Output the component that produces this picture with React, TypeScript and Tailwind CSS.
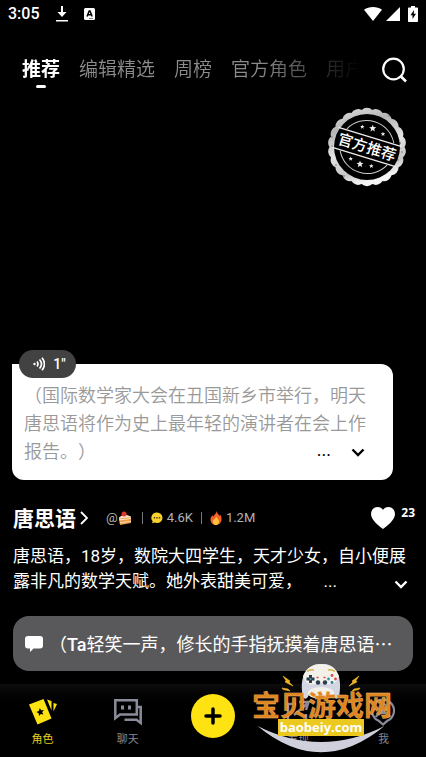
import * as React from "react";
import { useState } from "react";

const TABS = ["推荐", "编辑精选", "周榜", "官方角色", "用户"];

function StatusBar() {
  return (
    <div className="flex h-7 items-center px-2">
      <span className="font-['Roboto',sans-serif] text-base font-medium leading-7">3:05</span>
      <svg className="ml-4 h-4 w-3" viewBox="0 0 12 16" fill="#fff">
        <path d="M5 0h2v6h3.500L6 11 1.500 6H5zM0 14h12v1.500H0z" />
      </svg>
      <svg className="ml-4 h-3 w-3" viewBox="0 0 12 12">
        <rect width="11" height="12" rx="1.500" fill="#fff" />
        <path d="M3 8.500 5.200 3h.8l2.200 5.500M4 6.700h3.200" stroke="#000" strokeWidth="1.500" fill="none" />
        <path d="M5.500 10.500h1M7.500 10.500h1" stroke="#000" />
      </svg>
      <div className="ml-auto flex items-center">
        <svg className="h-3.5 w-4.5" viewBox="0 0 18 14" fill="#fff">
          <path d="M9 14 0 2.800C5-.9 13-.9 18 2.800z" />
        </svg>
        <svg className="ml-1 h-3.5 w-3.5" viewBox="0 0 14 14" fill="#fff">
          <path d="M14 0v14H0z" />
        </svg>
        <svg className="ml-2 h-4 w-2.5" viewBox="0 0 10 16">
          <path d="M3 0h4v1.500h2c.6 0 1 .4 1 1V15c0 .6-.4 1-1 1H1c-.6 0-1-.4-1-1V2.500c0-.6.400-1 1-1h2z" fill="#fff" />
          <path d="M6 4 2.500 9.300h2V13L8 7.700H5.800z" fill="#000" />
        </svg>
      </div>
    </div>
  );
}

function scallop() {
  const points = 22;
  let d = "";
  for (let i = 0; i <= points; i++) {
    const a = (i / points) * Math.PI * 2;
    const x = (40 + 37.5 * Math.cos(a)).toFixed(2);
    const y = (40 + 37.5 * Math.sin(a)).toFixed(2);
    d += i === 0 ? `M${x} ${y}` : `A8 8 0 0 1 ${x} ${y}`;
  }
  return d + "Z";
}

const STAR = "M0-3.500.9-1.200 3.500-1 1.500.600 2.200 3.200 0 1.700-2.200 3.200-1.500.600-3.500-1-.9-1.200z";

function OfficialBadge() {
  return (
    <svg className="h-20 w-20" viewBox="0 0 80 80" role="img" aria-label="官方推荐">
      <defs>
        <linearGradient id="ring" x1="0" y1="0" x2="0.300" y2="1">
          <stop offset="0" stopColor="#e6e6e6" />
          <stop offset="0.300" stopColor="#b5b5b5" />
          <stop offset="0.600" stopColor="#e4e4e4" />
          <stop offset="0.850" stopColor="#c6c6c6" />
          <stop offset="1" stopColor="#f5f5f5" />
        </linearGradient>
      </defs>
      <path d={scallop()} fill="url(#ring)" />
      <circle cx="40" cy="40" r="33" fill="#000" />
      <g transform="rotate(17 40 40)">
        <path d="M15.500 28.500A27.500 27.500 0 0 1 64.500 28.500M15.500 51.500A27.500 27.500 0 0 0 64.500 51.500" fill="none" stroke="#ccc" />
        <path d="M7 29.500h66M7 50.500h66" stroke="#eee" strokeWidth="1.200" />
        <text x="40" y="45.500" textAnchor="middle" fill="#fff" fontSize="15" fontWeight="500">官方推荐</text>
      </g>
      <g fill="#eee">
        <path d={STAR} transform="translate(45.700 21.300)" />
        <path d={STAR} transform="translate(35.300 19.700) scale(.65)" />
        <path d={STAR} transform="translate(56 27) scale(.65)" />
        <path d={STAR} transform="translate(33 57)" />
        <path d={STAR} transform="translate(23.700 51.700) scale(.65)" />
        <path d={STAR} transform="translate(44.300 59) scale(.65)" />
      </g>
      <g fill="#000" opacity="0.450">
        <circle cx="73" cy="36" r=".9" />
        <circle cx="75" cy="45" r=".8" />
        <circle cx="74" cy="41" r=".5" />
        <circle cx="71" cy="53" r=".7" />
        <circle cx="9" cy="58" r=".8" />
        <circle cx="5" cy="30" r=".7" />
        <circle cx="5" cy="39" r=".7" />
        <circle cx="17" cy="69" r=".8" />
        <circle cx="62" cy="9" r=".7" />
      </g>
    </svg>
  );
}

function Chevron({ className }: { className: string }) {
  return (
    <svg className={className} viewBox="0 0 14 9" fill="none" stroke="currentColor" strokeWidth="2.400">
      <path d="M1.500 1.500 7 7l5.500-5.500" />
    </svg>
  );
}

function CakeIcon() {
  return (
    <svg className="h-3.5 w-3.5" viewBox="0 0 14 14">
      <path d="M1 6.500 6 3l7 2.500v2L1 9z" fill="#fbe3d3" />
      <path d="M1 7.500 13 6v6L2 14z" fill="#f0a04b" />
      <path d="M1 8.500 13 7v.8L1 9.500zM1.500 11.500 13 10v.6L1.800 12.200z" fill="#fff0e0" />
      <circle cx="6" cy="3" r="2.500" fill="#e2372b" />
    </svg>
  );
}

function BubbleIcon() {
  return (
    <svg className="h-3 w-3" viewBox="0 0 12 12">
      <path d="M6 .5a5.500 5.300 0 1 1 0 10.600c-.9 0-1.700-.2-2.400-.5L1 11.300l.7-2A5.300 5.300 0 0 1 6 .5z" fill="#fbd32f" />
      <path d="M2.800 5.800h1.400M5.300 5.800h1.400M7.800 5.800h1.400" stroke="#5b3a10" strokeWidth="1.400" />
    </svg>
  );
}

function FireIcon() {
  return (
    <svg className="h-3.5 w-3" viewBox="0 0 12 14">
      <path d="M6.500 0c.3 2.500 2.300 3.200 3 5l.7-1.400c1 1.500 1.300 3 1.300 4.600C11.500 11.500 9 14 6 14S.5 11.700.5 8.700c0-2 .8-3.200 1.800-4.500l.8 1.600C4 4 6.300 3 6.500 0z" fill="#f4622a" />
      <path d="M6.200 5.500c.3 1.800 2.800 2.600 2.800 5C9 12.500 7.700 14 6 14s-3.200-1.400-3.200-3.300c0-2 2.900-2.800 3.400-5.200z" fill="#fdc23b" />
    </svg>
  );
}

function CardsIcon() {
  return (
    <svg className="h-7 w-7" viewBox="0 0 28 28">
      <path d="M0 6.500 14.500 1 22.500 20.500 8.500 26.500z" fill="#ffe211" />
      <path d="m10.800 10 1.300 2.300 2.700-.4-1.600 2.300 1.300 2.300-2.700-.5-1.800 2-.3-2.700-2.400-1.200 2.500-1.200z" fill="#000" />
      <path d="M18 1.500 22.500 3v9.500zM24.500 5l3.500 1-3.500 7.500z" fill="#ffe211" />
    </svg>
  );
}

function ChatIcon() {
  return (
    <svg className="h-7 w-7" viewBox="0 0 28 28" fill="none" stroke="#8a8b99" strokeWidth="2.500">
      <path d="M1.300 2.300h21.500v14.200H6l-4.700 3.700z" />
      <path d="M8.500 7.500v4M15.500 7.500v4" strokeWidth="3" />
      <path d="M24 9h2.700v16l-4.200-3.200H10.500" />
    </svg>
  );
}

function DiscoverIcon() {
  return (
    <svg className="h-7 w-7" viewBox="0 0 28 28" fill="none" stroke="#8a8b99" strokeWidth="2.500">
      <path d="M12 6H4v17h18v-7" />
      <path d="m10 17 14-12M15 4h9.500L22 12" />
    </svg>
  );
}

function MeIcon() {
  return (
    <svg className="h-7 w-7" viewBox="0 0 28 28" fill="none" stroke="#8a8b99" strokeWidth="2.200">
      <path d="M14 26.500 9.700 22.800A11 11 0 1 1 18.300 22.800z" />
      <circle cx="14" cy="9.500" r="3.500" />
      <path d="M7 19c2-5.500 12-5.500 14 0" />
    </svg>
  );
}

function Watermark() {
  return (
    <svg className="pointer-events-none absolute right-5 bottom-[3px] h-[92px] w-40" viewBox="0 0 160 92">
      <path d="M11.500 64Q75 116.500 138.500 64 75 96 11.500 64z" fill="#cfd0dc" />
      <path d="M57 35C54 20 56 3 75 2s21 18 18 33c-3 4-5 0-7-4-4-5-18-5-22 0-2 4-4 8-7 4z" fill="#d5d6e3" />
      <path d="M57 14C61 5 67 2 75 2s14 3 18 12c-3 10-10 9-18 7-8 2-15 3-18-7z" fill="#f3f1ea" />
      <ellipse cx="75" cy="31" rx="13" ry="6" fill="#f3f1ea" />
      <path d="M61 9.500q3-2.500 7-1.500M82 8q4-1 7 1.500" stroke="#d9b24c" strokeWidth="1.500" fill="none" />
      <path d="M60.500 17h8M64.500 13v8" stroke="#2b3b52" strokeWidth="3" />
      <circle cx="64.500" cy="17" r="1" fill="#4e9d9c" />
      <circle cx="86" cy="13.500" r="1.400" fill="#d74a4a" />
      <circle cx="86" cy="20.500" r="1.400" fill="#2c7f9e" />
      <circle cx="82.500" cy="17" r="1.400" fill="#2c9ba5" />
      <circle cx="89.500" cy="17" r="1.400" fill="#d74a4a" />
      <path d="M70.500 15.500h2M77.500 15.500h2" stroke="#d74a4a" strokeWidth="1.500" />
      <circle cx="72" cy="20.500" r="2.200" fill="#2b3b52" />
      <circle cx="79" cy="20.500" r="2.200" fill="#2b3b52" />
      <path d="m37 14 7 5-1 1 4 4-8-4 1-1.500zM113 14l-7 5 1 1-4 4 8-4-1-1.500zM36 26l6 1 2 2-7-1.500zM114 26l-6 1-2 2 7-1.500z" fill="#f0b429" stroke="#f0b429" strokeWidth=".6" />
      <text x="6" y="54" fontSize="28" fontWeight="700" fill="#df8620" stroke="#e9b878" strokeWidth=".4">宝贝游戏网</text>
      <rect x="32" y="57" width="86" height="17" fill="#ecc91f" />
      <text x="75" y="70" textAnchor="middle" fontSize="13" fontWeight="700" fill="#fff" className="font-['Open_Sans',sans-serif]">baobeiy.com</text>
    </svg>
  );
}

function NavItem({ label, active, children }: { label: string; active?: boolean; children: React.ReactNode }) {
  return (
    <button className={`flex flex-col items-center gap-1 text-[11px] leading-4 ${active ? "text-[#e6cc20]" : "text-[#85868f]"}`}>
      {children}
      {label}
    </button>
  );
}

export default function App() {
  const [tab, setTab] = useState("推荐");

  return (
    <div className="relative flex min-h-screen flex-col overflow-hidden bg-black font-['Noto_Sans_CJK_SC',sans-serif] text-white [text-spacing-trim:space-all]">
      <StatusBar />

      <header className="mt-5 flex h-11 items-center pl-[22px] pr-[18px]">
        <nav className="flex min-w-0 flex-1 gap-[19px] overflow-hidden [mask-image:linear-gradient(to_right,#000_70%,transparent_100%)]">
          {TABS.map((name) => (
            <button
              key={name}
              onClick={() => setTab(name)}
              className={`relative h-11 shrink-0 whitespace-nowrap pb-1 text-[19px] ${tab === name ? "font-bold text-white" : "font-[350] text-[#8c8c8c]"}`}
            >
              {name}
              {tab === name && <span className="absolute bottom-1 left-1/2 h-[3px] w-2.5 -translate-x-1/2 rounded-full bg-white" />}
            </button>
          ))}
        </nav>
        <button aria-label="搜索" className="ml-5">
          <svg className="h-7 w-7" viewBox="0 0 28 28" fill="none" stroke="#fff" strokeWidth="2.200">
            <circle cx="13.500" cy="13" r="10.300" />
            <path d="m20.500 20 5.500 5.500" strokeWidth="2.600" />
          </svg>
        </button>
      </header>

      <div className="mt-[15px] flex justify-end pr-[19px]">
        <OfficialBadge />
      </div>

      <main className="mt-auto px-[13px]">
        <section className="relative -ml-px mr-5 rounded-xl rounded-tl-none bg-white px-3 py-4">
          <button className="absolute -top-3.5 left-[7px] flex h-7 w-[57px] items-center justify-center gap-2 rounded-full bg-[#424242] pl-1 font-['Roboto',sans-serif] text-sm font-medium text-white">
            <svg className="h-3.5 w-3" viewBox="0 0 12 14" fill="none" stroke="#fff" strokeWidth="1.700">
              <path d="M4 4.500q2 2.500 0 5M6.500 2.500q4 4.500 0 9M9 .8q5 6.200 0 12.400" />
              <circle cx="1.500" cy="7" r="1.200" fill="#fff" stroke="none" />
            </svg>
            1"
          </button>
          <div className="text-lg font-[350] leading-7 text-[#999]">
            （国际数学家大会在丑国新乡市举行，明天唐思语将作为史上最年轻的演讲者在会上作报告。）
            <button aria-label="展开开场白" className="float-right mr-4 flex h-7 items-center gap-5 font-['Roboto',sans-serif] font-normal text-black">
              ...
              <Chevron className="mt-1 h-[9px] w-3.5" />
            </button>
          </div>
        </section>

        <div className="mt-6 flex h-7 items-center">
          <h1 className="text-[21px] font-bold">
            <a href="#role" className="flex items-center gap-1">
              唐思语
              <svg className="h-3.5 w-2" viewBox="0 0 8 14" fill="none" stroke="#fff" strokeWidth="1.800">
                <path d="m1 1 6 6-6 6" />
              </svg>
            </a>
          </h1>
          <div className="ml-[18px] flex items-center gap-1 font-['Roboto',sans-serif] text-[13px] text-[#b3b3b3]">
            <span className="flex items-center">@<CakeIcon /></span>
            <span className="ml-1.5 mr-1 h-3 w-px bg-[#777]" />
            <BubbleIcon />
            4.6K
            <span className="mx-1 h-3 w-px bg-[#777]" />
            <FireIcon />
            1.2M
          </div>
          <button className="ml-auto -mr-0.5 flex gap-1.5 font-['Open_Sans',sans-serif] text-xs font-bold leading-3">
            <svg className="h-[22px] w-6" viewBox="0 0 24 22" fill="#fff" aria-label="喜欢">
              <path d="M12 22C8 19 0 13 0 7c0-4 3-7 6.500-7C9 0 11 1 12 3c1-2 3-3 5.500-3C21 0 24 3 24 7c0 6-8 12-12 15z" />
            </svg>
            23
          </button>
        </div>

        <div className="mt-3 font-['Roboto','Noto_Sans_CJK_SC',sans-serif] text-[17px] leading-[25px]">
          唐思语，18岁，数院大四学生，天才少女，自小便展露非凡的数学天赋。她外表甜美可爱，
          <button aria-label="展开简介" className="float-right mr-1 flex h-[25px] items-center gap-14">
            ...
            <Chevron className="mt-1.5 h-[9px] w-4" />
          </button>
        </div>

        <button className="mt-[22px] mb-[13px] flex h-[55px] w-full items-center rounded-2xl bg-[#59595b] px-3 text-left text-lg">
          <svg className="mr-1.5 h-4 w-[18px] shrink-0" viewBox="0 0 18 16" fill="#fff">
            <path d="M3 0h12c2 0 3 1.200 3 3v6.500c0 2-1 3-3 3H8.500L5 16v-3.500H3c-2 0-3-1-3-3V3c0-1.800 1-3 3-3z" />
          </svg>
          <span className="whitespace-nowrap">
            （<b className="font-['Roboto',sans-serif] font-medium">Ta</b>轻笑一声，修长的手指抚摸着唐思语…
          </span>
        </button>
      </main>

      <nav className="grid h-[73px] grid-cols-5 items-start bg-linear-to-b from-[#0e0e0e] to-black to-40% pt-3.5">
        <NavItem label="角色" active><CardsIcon /></NavItem>
        <NavItem label="聊天"><ChatIcon /></NavItem>
        <button aria-label="创建" className="-mt-1 flex h-11 w-11 items-center justify-center justify-self-center rounded-full bg-[#ffe211]">
          <svg className="h-5 w-5" viewBox="0 0 20 20" stroke="#000" strokeWidth="3.500" strokeLinecap="round">
            <path d="M10 3v14M3 10h14" />
          </svg>
        </button>
        <NavItem label="发现"><DiscoverIcon /></NavItem>
        <NavItem label="我"><MeIcon /></NavItem>
      </nav>

      <Watermark />
    </div>
  );
}
